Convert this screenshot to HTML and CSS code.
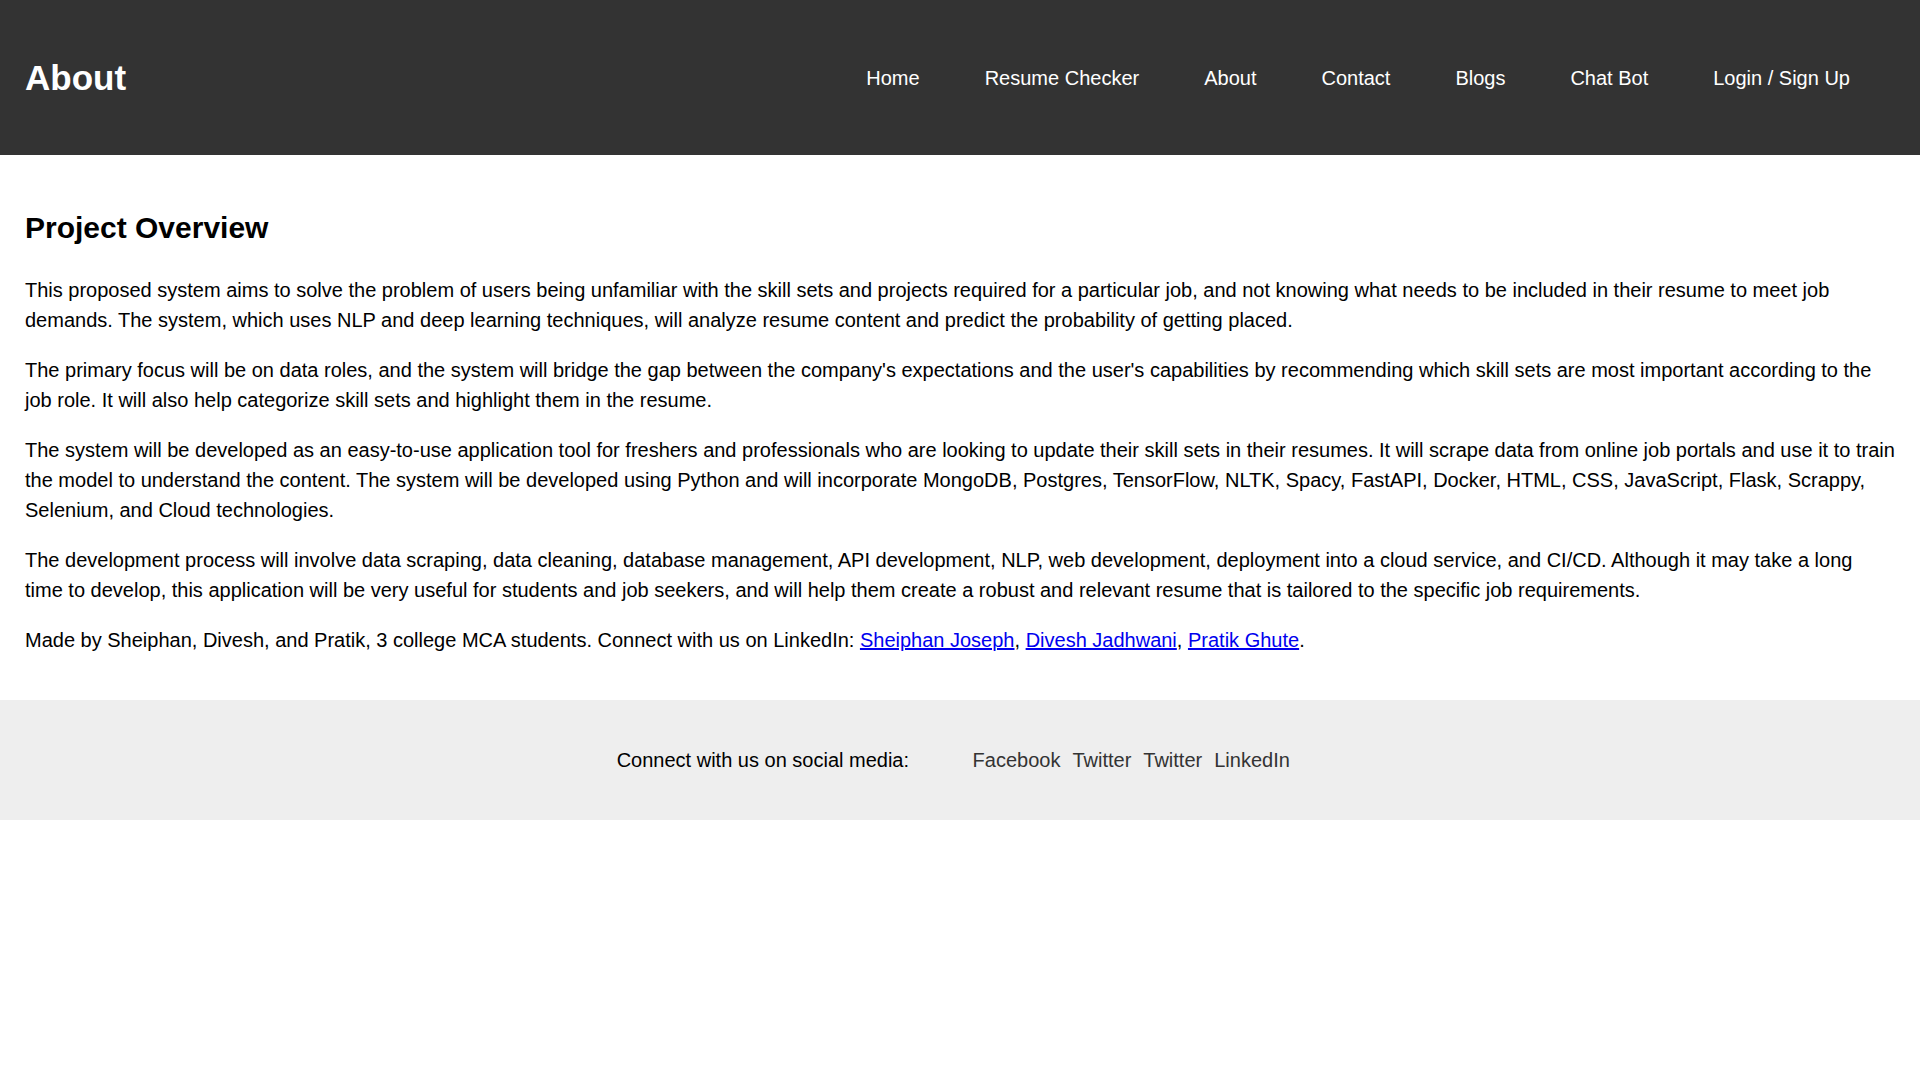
FILE: index.html
```html
<!DOCTYPE html>
<html lang="en">
<head>
<meta charset="utf-8">
<title>About</title>
<link rel="stylesheet" href="styles.css">
</head>
<body>
<header class="site-header">
  <h1 class="site-title">About</h1>
  <nav class="main-nav">
    <a href="#">Home</a>
    <a href="#">Resume Checker</a>
    <a href="#">About</a>
    <a href="#">Contact</a>
    <a href="#">Blogs</a>
    <a href="#">Chat Bot</a>
    <a href="#">Login / Sign Up</a>
  </nav>
</header>
<main class="content">
  <h2 class="section-title">Project Overview</h2>
  <p>This proposed system aims to solve the problem of users being unfamiliar with the skill sets and projects required for a particular job, and not knowing what needs to be included in their resume to meet job demands. The system, which uses NLP and deep learning techniques, will analyze resume content and predict the probability of getting placed.</p>
  <p>The primary focus will be on data roles, and the system will bridge the gap between the company's expectations and the user's capabilities by recommending which skill sets are most important according to the job role. It will also help categorize skill sets and highlight them in the resume.</p>
  <p>The system will be developed as an easy-to-use application tool for freshers and professionals who are looking to update their skill sets in their resumes. It will scrape data from online job portals and use it to train the model to understand the content. The system will be developed using Python and will incorporate MongoDB, Postgres, TensorFlow, NLTK, Spacy, FastAPI, Docker, HTML, CSS, JavaScript, Flask, Scrappy, Selenium, and Cloud technologies.</p>
  <p>The development process will involve data scraping, data cleaning, database management, API development, NLP, web development, deployment into a cloud service, and CI/CD. Although it may take a long time to develop, this application will be very useful for students and job seekers, and will help them create a robust and relevant resume that is tailored to the specific job requirements.</p>
  <p>Made by Sheiphan, Divesh, and Pratik, 3 college MCA students. Connect with us on LinkedIn: <a href="#">Sheiphan Joseph</a>, <a href="#">Divesh Jadhwani</a>, <a href="#">Pratik Ghute</a>.</p>
</main>
<footer class="site-footer">
  <p class="footer-text">Connect with us on social media:</p>
  <div class="social">
    <a href="#">Facebook</a>
    <a href="#">Twitter</a>
    <a href="#">Twitter</a>
    <a href="#">LinkedIn</a>
  </div>
</footer>
</body>
</html>
```

FILE: styles.css
```css
html, body {
  margin: 0;
  padding: 0;
  background: #ffffff;
}

body {
  font-family: "Liberation Sans", Arial, sans-serif;
  font-size: 20px;
  color: #000;
}

.site-header {
  height: 155px;
  background: #333333;
  display: flex;
  align-items: center;
  justify-content: space-between;
  padding: 0 70px 0 25px;
  box-sizing: border-box;
}

.site-title {
  margin: 0;
  font-size: 35px;
  font-weight: bold;
  color: #ffffff;
  line-height: normal;
}

.main-nav {
  display: flex;
  gap: 65px;
  margin-top: 2px;
}

.main-nav a {
  color: #ffffff;
  text-decoration: none;
  font-size: 20px;
  line-height: normal;
}

.content {
  padding: 0 25px 24.5px;
}

.section-title {
  margin: 55px 0 29px;
  font-size: 30px;
  font-weight: bold;
  line-height: 36px;
}

.content p {
  margin: 0 0 20px;
  line-height: 30px;
}

.content p a {
  color: #0000ee;
  text-decoration: underline;
}

.site-footer {
  height: 120px;
  box-sizing: border-box;
  padding-top: 2px;
  background: #eeeeee;
  display: flex;
  align-items: center;
  justify-content: center;
}

.footer-text {
  margin: 0;
  color: #000;
  line-height: normal;
}

.social {
  display: flex;
  gap: 12px;
  margin-left: 63.5px;
  padding-right: 13.5px;
}

.social a {
  color: #333333;
  text-decoration: none;
  line-height: normal;
}
```
